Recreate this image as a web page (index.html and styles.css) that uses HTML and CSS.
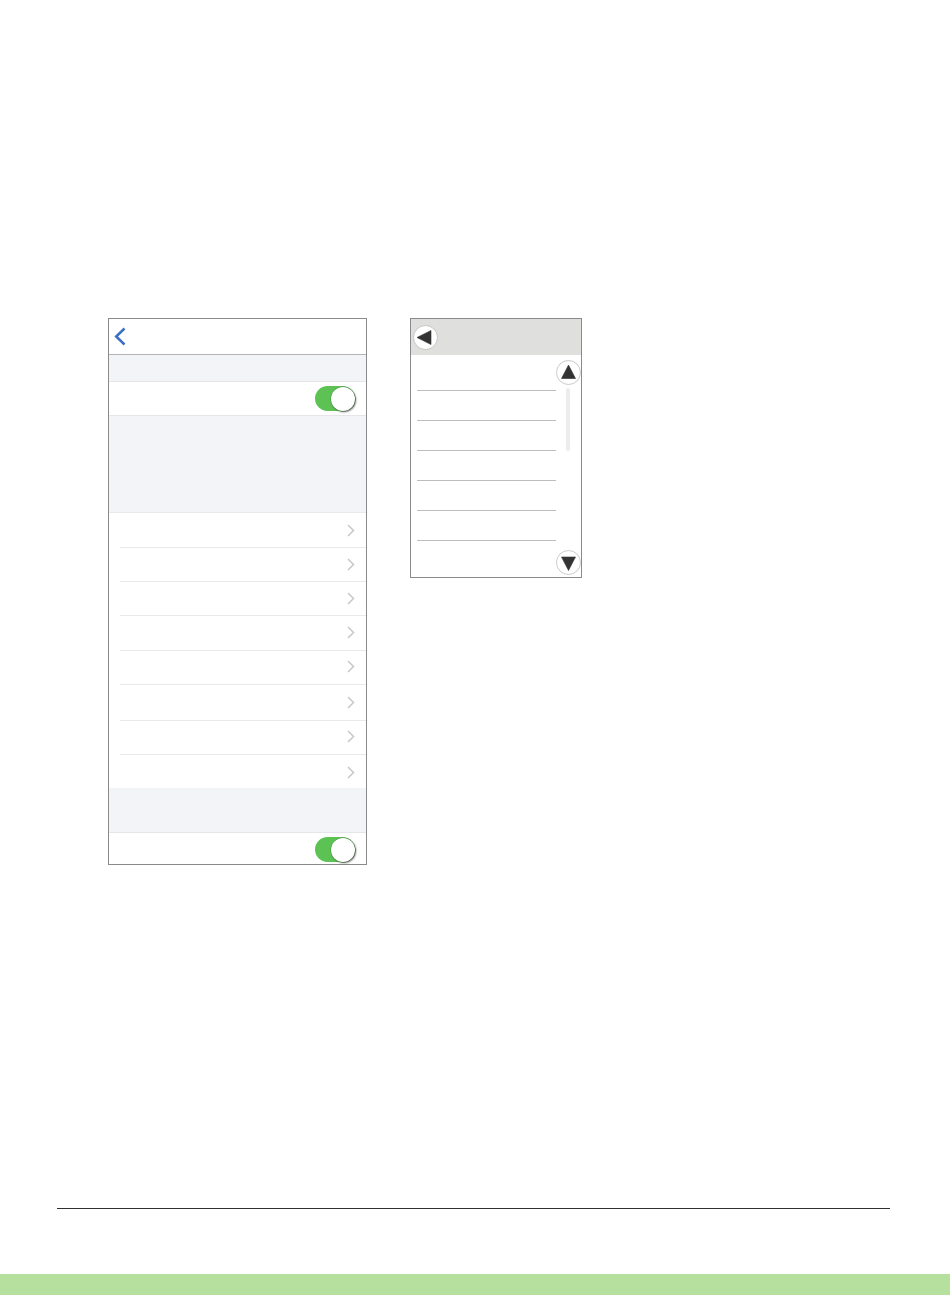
FILE: index.html
```html
<!DOCTYPE html>
<html lang="en">
<head>
    <meta charset="UTF-8">
    <meta name="viewport" content="width=device-width, initial-scale=1.0">
    <title>Document</title>
    <link rel="stylesheet" href="styles.css">
</head>
<body>
    <main class="screens">
        <section class="phone">
            <div class="phone__nav">
                <svg class="phone__back" width="12" height="19" viewBox="0 0 12 19">
                    <path d="M10.5 1.5 L2.2 9.5 L10.5 17.5" fill="none" stroke="#3b6fc4" stroke-width="2.5"/>
                </svg>
            </div>
            <div class="phone__gap phone__gap_top"></div>
            <div class="switch-row switch-row_top">
                <div class="switch"><div class="switch__knob"></div></div>
            </div>
            <div class="phone__gap phone__gap_middle"></div>
            <div class="link-list">
                <div class="link-list__row"><svg class="chevron" width="8" height="13" viewBox="0 0 8 13"><path d="M1 1 L6.5 6.5 L1 12" fill="none" stroke="#c7c7cc" stroke-width="1.5"/></svg></div>
                <div class="link-list__row"><svg class="chevron" width="8" height="13" viewBox="0 0 8 13"><path d="M1 1 L6.5 6.5 L1 12" fill="none" stroke="#c7c7cc" stroke-width="1.5"/></svg></div>
                <div class="link-list__row"><svg class="chevron" width="8" height="13" viewBox="0 0 8 13"><path d="M1 1 L6.5 6.5 L1 12" fill="none" stroke="#c7c7cc" stroke-width="1.5"/></svg></div>
                <div class="link-list__row"><svg class="chevron" width="8" height="13" viewBox="0 0 8 13"><path d="M1 1 L6.5 6.5 L1 12" fill="none" stroke="#c7c7cc" stroke-width="1.5"/></svg></div>
                <div class="link-list__row"><svg class="chevron" width="8" height="13" viewBox="0 0 8 13"><path d="M1 1 L6.5 6.5 L1 12" fill="none" stroke="#c7c7cc" stroke-width="1.5"/></svg></div>
                <div class="link-list__row"><svg class="chevron" width="8" height="13" viewBox="0 0 8 13"><path d="M1 1 L6.5 6.5 L1 12" fill="none" stroke="#c7c7cc" stroke-width="1.5"/></svg></div>
                <div class="link-list__row"><svg class="chevron" width="8" height="13" viewBox="0 0 8 13"><path d="M1 1 L6.5 6.5 L1 12" fill="none" stroke="#c7c7cc" stroke-width="1.5"/></svg></div>
                <div class="link-list__row"><svg class="chevron" width="8" height="13" viewBox="0 0 8 13"><path d="M1 1 L6.5 6.5 L1 12" fill="none" stroke="#c7c7cc" stroke-width="1.5"/></svg></div>
            </div>
            <div class="phone__gap phone__gap_bottom"></div>
            <div class="switch-row switch-row_bottom">
                <div class="switch"><div class="switch__knob"></div></div>
            </div>
        </section>

        <section class="panel">
            <div class="panel__head">
                <svg class="round-btn" width="25" height="25" viewBox="0 0 25 25">
                    <circle cx="12.5" cy="12.5" r="12" fill="#fff" stroke="#b4b4b4" stroke-width="0.7"/>
                    <path d="M4 12.5 L18 5.5 V19.5 Z" fill="#333" stroke="#333" stroke-width="0.6" stroke-linejoin="round"/>
                </svg>
            </div>
            <div class="panel__body">
                <div class="panel__list">
                    <div class="panel__item"></div>
                    <div class="panel__item"></div>
                    <div class="panel__item"></div>
                    <div class="panel__item"></div>
                    <div class="panel__item"></div>
                    <div class="panel__item"></div>
                </div>
                <div class="panel__scroll">
                    <svg class="round-btn" width="25" height="25" viewBox="0 0 25 25">
                        <circle cx="12.5" cy="12.5" r="12" fill="#fff" stroke="#b4b4b4" stroke-width="0.7"/>
                        <path d="M12.5 5 L19.5 18.5 H5.5 Z" fill="#333" stroke="#333" stroke-width="0.6" stroke-linejoin="round"/>
                    </svg>
                    <div class="panel__track"></div>
                    <svg class="round-btn round-btn_down" width="25" height="25" viewBox="0 0 25 25">
                        <circle cx="12.5" cy="12.5" r="12" fill="#fff" stroke="#b4b4b4" stroke-width="0.7"/>
                        <path d="M5.5 7 H19.5 L12.5 20.5 Z" fill="#333" stroke="#333" stroke-width="0.6" stroke-linejoin="round"/>
                    </svg>
                </div>
            </div>
        </section>
    </main>

    <footer class="page-foot">
        <div class="page-foot__rule"></div>
        <div class="page-foot__band"></div>
    </footer>
</body>
</html>
```

FILE: styles.css
```css
html, body {
    margin: 0;
    padding: 0;
}
body {
    display: flex;
    flex-direction: column;
    justify-content: space-between;
    height: 1295px;
    background-color: #fff;
    font-family: "Liberation Sans", sans-serif;
}
.screens {
    display: flex;
    align-items: flex-start;
    gap: 43px;
    padding: 318px 0 0 108px;
}

/* left screen */
.phone {
    width: 259px;
    height: 547px;
    box-sizing: border-box;
    border: 1px solid #8a8a8a;
}
.phone__nav {
    display: flex;
    align-items: center;
    height: 36px;
    box-sizing: border-box;
    padding-left: 5px;
    border-bottom: 1px solid #b4b4b8;
}
.phone__back {
    display: block;
}
.phone__gap {
    background-color: #f3f4f8;
}
.phone__gap_top {
    height: 26px;
}
.phone__gap_middle {
    height: 96px;
}
.phone__gap_bottom {
    height: 44px;
}
.switch-row {
    display: flex;
    align-items: center;
    justify-content: flex-end;
    box-sizing: border-box;
    padding-right: 11px;
    background-color: #fff;
    border-top: 1px solid #e6e6ea;
}
.switch-row_top {
    height: 35px;
    border-bottom: 1px solid #e6e6ea;
}
.switch-row_bottom {
    height: 32px;
    padding-top: 2px;
}
.switch {
    display: flex;
    justify-content: flex-end;
    align-items: center;
    width: 40px;
    height: 25px;
    border-radius: 13px;
    background-color: #5cc254;
}
.switch__knob {
    width: 24px;
    height: 24px;
    border-radius: 50%;
    background-color: #fff;
    box-shadow: 1px 1px 2px rgba(0, 0, 0, 0.6), 0 0 0 0.5px #4a9c44;
}
.link-list {
    border-top: 1px solid #e9e9ed;
}
.link-list__row {
    display: flex;
    align-items: center;
    justify-content: flex-end;
    height: 34px;
    box-sizing: border-box;
    margin-left: 11px;
    padding-right: 11px;
    border-bottom: 1px solid #e9e9ed;
}
.link-list__row:nth-child(1),
.link-list__row:nth-child(4) {
    height: 35px;
}
.link-list__row:nth-child(6) {
    height: 36px;
}
.link-list__row:nth-child(4),
.link-list__row:nth-child(5),
.link-list__row:nth-child(7) {
    padding-bottom: 2px;
}
.link-list__row:last-child {
    height: 33px;
    padding-top: 2px;
    border-bottom: none;
}
.chevron {
    display: block;
}

/* right screen */
.panel {
    width: 172px;
    height: 260px;
    box-sizing: border-box;
    border: 1px solid #8a8a8a;
}
.panel__head {
    display: flex;
    align-items: center;
    height: 36px;
    padding-left: 2px;
    background-color: #dfdfdd;
}
.panel__body {
    display: flex;
    justify-content: space-between;
    height: 222px;
}
.panel__list {
    width: 139px;
    margin-left: 6px;
}
.panel__item {
    height: 30px;
    box-sizing: border-box;
    border-bottom: 1px solid #bdbdbd;
}
.panel__item:first-child {
    height: 36px;
}
.panel__scroll {
    display: flex;
    flex-direction: column;
    width: 25px;
    padding-top: 5px;
}
.panel__track {
    width: 4px;
    height: 63px;
    margin: 3px 0 0 10px;
    border-radius: 2px;
    background-color: #ececec;
}
.round-btn {
    display: block;
    flex: none;
}
.round-btn_down {
    margin-top: 99px;
}

/* footer */
.page-foot__rule {
    height: 1px;
    margin: 0 60px 65px 57px;
    background-color: #2f2f2f;
}
.page-foot__band {
    height: 21px;
    background-color: #b6e09d;
}
```
